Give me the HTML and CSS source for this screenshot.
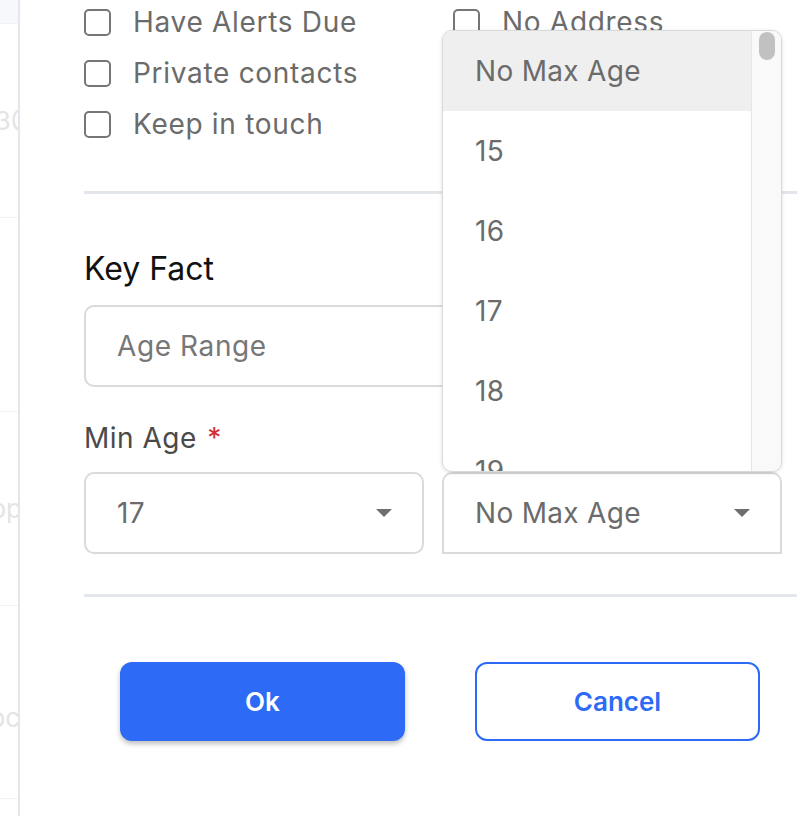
FILE: index.html
```html
<!DOCTYPE html>
<html lang="en">
<head>
<meta charset="utf-8">
<title>Key Fact filter</title>
<link rel="stylesheet" href="styles.css">
</head>
<body>
<div class="app">
  <aside class="sidebar">
    <div class="side-top"></div>
    <div class="side-row"><span class="side-text">contact13@</span></div>
    <div class="side-row"></div>
    <div class="side-row"><span class="side-text side-text-b">App</span></div>
    <div class="side-row side-row-low"><span class="side-text side-text-c">abc</span></div>
    <div class="side-row"></div>
  </aside>
  <main class="dialog">
    <div class="checks">
      <label class="check"><span class="box"></span><span>Have Alerts Due</span></label>
      <label class="check"><span class="box"></span><span>No Address</span></label>
      <label class="check"><span class="box"></span><span>Private contacts</span></label>
      <div></div>
      <label class="check"><span class="box"></span><span>Keep in touch</span></label>
    </div>
    <div class="divider"></div>
    <div class="form">
      <h2 class="section-title">Key Fact</h2>
      <div class="field">Age Range</div>
      <div class="field-label">Min Age <span class="req">*</span></div>
      <div class="age-row">
        <div class="select">
          <span>17</span>
          <svg class="caret" width="16" height="8" viewBox="0 0 16 8"><path d="M0 0 H16 L8 8 Z" fill="#6e6e6e"/></svg>
        </div>
        <div class="select open">
          <span>No Max Age</span>
          <svg class="caret" width="16" height="8" viewBox="0 0 16 8"><path d="M0 0 H16 L8 8 Z" fill="#6e6e6e"/></svg>
          <div class="menu">
            <ul class="menu-list">
              <li class="menu-item active">No Max Age</li>
              <li class="menu-item">15</li>
              <li class="menu-item">16</li>
              <li class="menu-item">17</li>
              <li class="menu-item">18</li>
              <li class="menu-item">19</li>
            </ul>
            <div class="menu-scroll"><div class="thumb"></div></div>
          </div>
        </div>
      </div>
    </div>
    <div class="divider divider-bottom"></div>
    <div class="actions">
      <button class="btn btn-primary">Ok</button>
      <button class="btn btn-outline">Cancel</button>
    </div>
  </main>
</div>
</body>
</html>
```

FILE: styles.css
```css
html, body {
  margin: 0;
  padding: 0;
  background: #ffffff;
}

body {
  font-family: Inter, "Noto Sans", sans-serif;
}

.app {
  display: flex;
  height: 816px;
  overflow: hidden;
}

/* left sidebar (partially visible list behind) */
.sidebar {
  width: 18px;
  flex-shrink: 0;
  border-right: 2px solid #e3e7eb;
  display: flex;
  flex-direction: column;
  overflow: hidden;
}

.side-top {
  height: 23px;
  flex-shrink: 0;
  background: #f6f8fb;
  border-bottom: 1px solid #f0f2f4;
}

.side-row {
  height: 193px;
  flex-shrink: 0;
  border-bottom: 1px solid #f0f2f4;
  display: flex;
  align-items: center;
  justify-content: flex-end;
  overflow: hidden;
}

.side-row-low {
  padding-top: 30px;
  box-sizing: border-box;
}

.side-text {
  white-space: nowrap;
  color: #e4e4e4;
  font-size: 26px;
  margin-right: -18px;
}

.side-text-b {
  margin-right: -4px;
}

.side-text-c {
  margin-right: -2px;
}

/* dialog content */
.dialog {
  flex: 1;
  padding: 0 7px 0 64px;
  min-width: 0;
}

.checks {
  display: grid;
  grid-template-columns: 369px 1fr;
  grid-auto-rows: 27px;
  row-gap: 24px;
  margin-top: 9px;
}

.check {
  display: flex;
  align-items: center;
  gap: 22px;
  font-size: 28px;
  line-height: 27px;
  letter-spacing: 0.7px;
  color: #6b6b6b;
  white-space: nowrap;
}

.box {
  width: 27px;
  height: 27px;
  box-sizing: border-box;
  border: 2px solid #767676;
  border-radius: 5px;
  flex-shrink: 0;
}

.divider {
  height: 3px;
  background: #e3e6ea;
  margin-top: 53px;
}

.divider-bottom {
  margin-top: 40px;
}

.form {
  width: 698px;
}

.section-title {
  margin: 56px 0 17px;
  font-size: 32px;
  line-height: 38px;
  font-weight: 400;
  color: #111111;
}

.field {
  height: 82px;
  box-sizing: border-box;
  border: 2px solid #dadada;
  border-radius: 10px;
  padding: 0 31px;
  display: flex;
  align-items: center;
  font-size: 28px;
  letter-spacing: 0.6px;
  color: #777777;
}

.field-label {
  margin: 34px 0 17px;
  font-size: 28px;
  line-height: 34px;
  letter-spacing: 0.5px;
  color: #4a4a4a;
}

.req {
  color: #d32f2f;
  margin-left: 2px;
}

.age-row {
  display: grid;
  grid-template-columns: 1fr 1fr;
  column-gap: 18px;
}

.select {
  position: relative;
  height: 82px;
  box-sizing: border-box;
  border: 2px solid #dadada;
  border-radius: 10px;
  padding: 0 30px 0 31px;
  display: flex;
  align-items: center;
  justify-content: space-between;
  font-size: 28px;
  letter-spacing: 0.3px;
  color: #6b6b6b;
}

.select.open {
  border-bottom-left-radius: 0;
  border-bottom-right-radius: 0;
}

.caret {
  display: block;
  flex-shrink: 0;
}

/* open dropdown menu */
.menu {
  position: absolute;
  left: -2px;
  width: 340px;
  bottom: calc(100% + 2px);
  height: 442px;
  box-sizing: border-box;
  background: #ffffff;
  border: 1px solid #d9d9d9;
  border-radius: 10px;
  box-shadow: 0 1px 4px rgba(0, 0, 0, 0.12);
  display: flex;
  overflow: hidden;
}

.menu-list {
  list-style: none;
  margin: 0;
  padding: 0;
  flex: 1;
  overflow: hidden;
}

.menu-item {
  height: 80px;
  display: flex;
  align-items: center;
  padding-left: 32px;
  font-size: 28px;
  letter-spacing: 0.3px;
  color: #6b6b6b;
}

.menu-item.active {
  background: #efefef;
}

.menu-scroll {
  width: 30px;
  box-sizing: border-box;
  background: #f9f9f9;
  border-left: 1px solid #e6e6e6;
  padding: 1px 6px 0 7px;
}

.thumb {
  width: 16px;
  height: 28px;
  border-radius: 8px;
  background: #c1c1c1;
}

/* buttons */
.actions {
  display: flex;
  justify-content: space-between;
  padding: 0 37px 0 36px;
  margin-top: 65px;
}

.btn {
  width: 285px;
  height: 79px;
  box-sizing: border-box;
  border-radius: 12px;
  font-family: Inter, "Noto Sans", sans-serif;
  font-size: 26px;
  font-weight: 600;
  cursor: pointer;
}

.btn-primary {
  background: #2d6bf6;
  color: #ffffff;
  border: none;
  box-shadow: 0 3px 5px rgba(0, 0, 0, 0.25);
}

.btn-outline {
  background: #ffffff;
  color: #2d6bf6;
  border: 2px solid #2d6bf6;
}
```
